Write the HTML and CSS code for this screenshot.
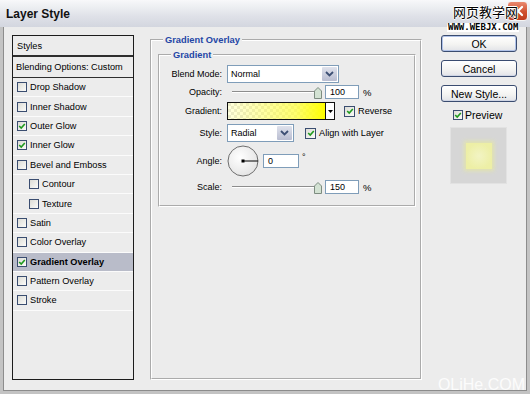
FILE: index.html
```html
<!DOCTYPE html>
<html>
<head>
<meta charset="utf-8">
<title>Layer Style</title>
<link rel="stylesheet" href="styles.css">
</head>
<body>
<div class="dialog">
  <div class="titlebar">
    <span class="title">Layer Style</span>
  </div>
  <div class="frame">
    <div class="list">
      <div class="row head">Styles</div>
      <div class="row blend">Blending Options: Custom</div>
      <div class="row item"><span class="cb"></span>Drop Shadow</div>
      <div class="row item"><span class="cb"></span>Inner Shadow</div>
      <div class="row item"><span class="cb on"><svg viewBox="0 0 10 10" width="8" height="8"><path d="M1.5 5 L4 7.5 L8.5 2.5" fill="none" stroke="#1f9a1f" stroke-width="2"/></svg></span>Outer Glow</div>
      <div class="row item"><span class="cb on"><svg viewBox="0 0 10 10" width="8" height="8"><path d="M1.5 5 L4 7.5 L8.5 2.5" fill="none" stroke="#1f9a1f" stroke-width="2"/></svg></span>Inner Glow</div>
      <div class="row item"><span class="cb"></span>Bevel and Emboss</div>
      <div class="row item sub"><span class="cb"></span>Contour</div>
      <div class="row item sub"><span class="cb"></span>Texture</div>
      <div class="row item"><span class="cb"></span>Satin</div>
      <div class="row item"><span class="cb"></span>Color Overlay</div>
      <div class="row item sel"><span class="cb on"><svg viewBox="0 0 10 10" width="8" height="8"><path d="M1.5 5 L4 7.5 L8.5 2.5" fill="none" stroke="#1f9a1f" stroke-width="2"/></svg></span>Gradient Overlay</div>
      <div class="row item"><span class="cb"></span>Pattern Overlay</div>
      <div class="row item"><span class="cb"></span>Stroke</div>
    </div>

    <fieldset class="group outer">
      <legend>Gradient Overlay</legend>
      <fieldset class="group inner">
        <legend>Gradient</legend>

        <div class="frow r1">
          <span class="lbl">Blend Mode:</span>
          <div class="select w-blend">
            <span class="val">Normal</span>
            <span class="dd"><svg viewBox="0 0 9 6" width="9" height="6"><path d="M1 1 L4.5 4.5 L8 1" fill="none" stroke="#3d4f74" stroke-width="1.8"/></svg></span>
          </div>
        </div>

        <div class="frow r2">
          <span class="lbl">Opacity:</span>
          <div class="slider">
            <span class="track"></span>
            <svg class="thumb" viewBox="0 0 8 12" width="8" height="12"><path d="M0.5 4 L4 0.5 L7.5 4 V11.5 H0.5 Z" fill="#d3e2d3" stroke="#7d8c80"/></svg>
          </div>
          <span class="input">100</span>
          <span class="unit">%</span>
        </div>

        <div class="frow r3">
          <span class="lbl">Gradient:</span>
          <div class="swatch">
            <span class="grad"></span>
            <span class="arrow"><svg viewBox="0 0 5 3" width="5" height="3"><path d="M0 0 H5 L2.5 3 Z" fill="#000"/></svg></span>
          </div>
          <span class="cb on ml-rev"><svg viewBox="0 0 10 10" width="8" height="8"><path d="M1.5 5 L4 7.5 L8.5 2.5" fill="none" stroke="#1f9a1f" stroke-width="2"/></svg></span>
          <span class="cbl">Reverse</span>
        </div>

        <div class="frow r4">
          <span class="lbl">Style:</span>
          <div class="select w-style">
            <span class="val">Radial</span>
            <span class="dd"><svg viewBox="0 0 9 6" width="9" height="6"><path d="M1 1 L4.5 4.5 L8 1" fill="none" stroke="#3d4f74" stroke-width="1.8"/></svg></span>
          </div>
          <span class="cb on ml-align"><svg viewBox="0 0 10 10" width="8" height="8"><path d="M1.5 5 L4 7.5 L8.5 2.5" fill="none" stroke="#1f9a1f" stroke-width="2"/></svg></span>
          <span class="cbl">Align with Layer</span>
        </div>

        <div class="frow r5">
          <span class="lbl">Angle:</span>
          <svg class="dial" viewBox="0 0 32 32" width="32" height="32">
            <defs>
              <radialGradient id="dg" cx="40%" cy="38%" r="70%">
                <stop offset="0" stop-color="#ffffff"/>
                <stop offset="1" stop-color="#e2e2e2"/>
              </radialGradient>
            </defs>
            <circle cx="16" cy="16" r="15" fill="url(#dg)" stroke="#6d6d6d" stroke-width="1"/>
            <line x1="16" y1="16" x2="31" y2="16" stroke="#000" stroke-width="1"/>
            <rect x="14.5" y="14.5" width="3" height="3" fill="#000"/>
          </svg>
          <span class="input w-angle">0</span>
          <span class="deg">°</span>
        </div>

        <div class="frow r6">
          <span class="lbl">Scale:</span>
          <div class="slider">
            <span class="track"></span>
            <svg class="thumb" viewBox="0 0 8 12" width="8" height="12"><path d="M0.5 4 L4 0.5 L7.5 4 V11.5 H0.5 Z" fill="#d3e2d3" stroke="#7d8c80"/></svg>
          </div>
          <span class="input">150</span>
          <span class="unit">%</span>
        </div>
      </fieldset>
    </fieldset>

    <div class="side">
      <div class="btn default">OK</div>
      <div class="btn">Cancel</div>
      <div class="btn">New Style...</div>
      <div class="prow">
        <span class="cb on"><svg viewBox="0 0 10 10" width="8" height="8"><path d="M1.5 5 L4 7.5 L8.5 2.5" fill="none" stroke="#1f9a1f" stroke-width="2"/></svg></span>
        <span>Preview</span>
      </div>
      <div class="preview"><span class="glow"></span></div>
    </div>
  </div>

  <span class="close"><svg viewBox="0 0 20 20" width="18" height="18"><path d="M5.5 5.5 L14.5 14.5 M14.5 5.5 L5.5 14.5" stroke="#fff" stroke-width="2.4" stroke-linecap="round"/></svg></span>
  <span class="wm-cn">网页教学网</span>
  <span class="wm-url">WWW.WEBJX.COM</span>
  <span class="wm-ol">OLiHe.COM</span>
</div>
</body>
</html>
```

FILE: styles.css
```css
* { box-sizing: border-box; }
html, body { margin: 0; padding: 0; }
body {
  width: 530px;
  height: 394px;
  overflow: hidden;
  background: #ececec;
  color: #000;
  font-family: "Liberation Sans", Arial, sans-serif;
  font-size: 9px;
}
.dialog {
  position: relative;
  width: 530px;
  height: 394px;
  display: flex;
  flex-direction: column;
  background: #ececec;
}
.titlebar {
  flex: none;
  height: 27px;
  display: flex;
  align-items: center;
  padding-left: 6px;
  background: linear-gradient(#f8f8fa 0%, #eef0f3 22%, #dfe1e8 60%, #d3d6df 100%);
}
.title {
  font-size: 12px;
  font-weight: bold;
  color: #111;
}
.frame {
  flex: 1;
  display: flex;
  border: 3px solid #c3c3c3;
  border-top: 0;
  box-shadow: inset 1px 0 0 #8c8c8c, inset -1px 0 0 #8c8c8c, inset 0 -1px 0 #8c8c8c;
  padding: 7px 10px 11px 9px;
}

/* style list */
.list {
  flex: none;
  width: 122px;
  margin-top: 1px;
  border: 1px solid #1c1c1c;
  background: #ececec;
  display: flex;
  flex-direction: column;
}
.row {
  flex: none;
  display: flex;
  align-items: center;
  white-space: nowrap;
  font-size: 9.2px;
}
.row.head {
  height: 21px;
  padding-left: 4px;
  border-bottom: 2px solid #2e2e2e;
}
.row.blend {
  height: 21px;
  padding-left: 3px;
  border-bottom: 1px solid #2e2e2e;
}
.row.item {
  height: 19.4px;
  padding-left: 4px;
  gap: 3px;
  border-bottom: 1px solid #fbfbfb;
}
.row.sub { padding-left: 16px; }
.row.sel {
  background: #b9bcc9;
  font-weight: bold;
}

/* checkbox */
.cb {
  flex: none;
  width: 11px;
  height: 11px;
  border: 1px solid #3a4d70;
  background: linear-gradient(135deg, #dcdcd6, #fbfbf9);
  display: inline-flex;
  align-items: center;
  justify-content: center;
}
.row .cb { width: 10px; height: 10px; }

/* groups */
.group {
  margin: 0;
  min-width: 0;
  border: 2px groove #ffffff;
}
.group > legend {
  padding: 0 2px;
  font-size: 9.3px;
  font-weight: bold;
  line-height: 12px;
  color: #2446a6;
}
.outer {
  flex: none;
  width: 272px;
  margin-left: 16px;
  padding: 3px 4px 0 6px;
}
.outer > legend { margin-left: 5px; }
.inner {
  padding: 3px 0 9px 0;
}
.inner > legend { margin-left: 11px; }

.frow {
  display: flex;
  align-items: center;
  white-space: nowrap;
}
.r1 { height: 20px; }
.r2 { height: 16px; }
.r3 { height: 22px; }
.r4 { height: 22px; }
.r5 { height: 34px; }
.r6 { height: 18px; }
.lbl {
  flex: none;
  width: 62px;
  margin-right: 5px;
  text-align: right;
}

.select {
  flex: none;
  height: 18px;
  display: flex;
  border: 1px solid #7f9db9;
  background: #fff;
}
.w-blend { width: 112px; }
.w-style { width: 67px; }
.select .val {
  flex: 1;
  display: flex;
  align-items: center;
  padding-left: 3px;
}
.select .dd {
  flex: none;
  width: 15px;
  margin: 1px;
  border-radius: 1px;
  background: linear-gradient(#dfe2ec, #b9bdd1);
  display: flex;
  align-items: center;
  justify-content: center;
}

.slider {
  position: relative;
  flex: none;
  width: 90px;
  height: 16px;
  margin-left: 5px;
}
.slider .track {
  position: absolute;
  left: 0;
  right: 4px;
  top: 7px;
  height: 2px;
  border-top: 1px solid #8d8d8d;
  border-bottom: 1px solid #ffffff;
}
.slider .thumb {
  position: absolute;
  right: 0;
  top: 3px;
}
.input {
  flex: none;
  width: 34px;
  height: 14px;
  margin-left: 3px;
  padding-left: 4px;
  display: flex;
  align-items: center;
  border: 1px solid #7f9db9;
  background: #fff;
}
.unit { margin-left: 4px; font-size: 9.5px; }

.swatch {
  flex: none;
  width: 108px;
  height: 18px;
  display: flex;
  border: 1px solid #111;
}
.swatch .grad {
  flex: 1;
  background:
    linear-gradient(to right, rgba(255, 255, 120, 0.25), rgba(255, 255, 60, 0.75) 70%, #ffff00),
    repeating-conic-gradient(#ffffff 0 25%, #e4e4e4 0 50%) 0 0 / 6px 6px;
}
.swatch .arrow {
  flex: none;
  width: 9px;
  border-left: 1px solid #111;
  background: #fff;
  display: flex;
  align-items: center;
  justify-content: center;
}
.ml-rev { margin-left: 9px; }
.ml-align { margin-left: 11px; }
.cbl { margin-left: 3px; font-size: 9.2px; }

.dial { flex: none; }
.w-angle { width: 36px; margin-left: 4px; }
.deg { margin-left: 3px; margin-bottom: 9px; }

/* right column */
.side {
  flex: none;
  width: 76px;
  margin-left: 19px;
  padding-top: 1px;
  display: flex;
  flex-direction: column;
  font-size: 10.5px;
}
.btn {
  flex: none;
  height: 17px;
  margin-bottom: 8px;
  display: flex;
  align-items: center;
  justify-content: center;
  border: 1px solid #3a4c70;
  border-radius: 3px;
  background: linear-gradient(#ffffff, #f4f4f2 55%, #e2e3e8);
  box-shadow: inset 0 -1px 0 #cfd5e4;
}
.btn.default {
  box-shadow: inset 0 0 0 1px #b0c2e8;
}
.prow {
  flex: none;
  height: 10px;
  display: flex;
  align-items: center;
  gap: 2px;
  padding-left: 12px;
}
.prow .cb { width: 10px; height: 10px; }
.preview {
  flex: none;
  width: 57px;
  height: 57px;
  margin-top: 7px;
  margin-left: 9px;
  background: #d6d6d6;
  box-shadow: inset 0 0 0 1px #e2e2e2;
  display: flex;
  align-items: center;
  justify-content: center;
}
.preview .glow {
  width: 26px;
  height: 26px;
  background: radial-gradient(#f2f4c4, #edefa6 70%);
  box-shadow: 0 0 4px 2px #e2e4ae;
}

/* overlays: close button and watermarks */
.close {
  position: absolute;
  top: 1px;
  left: 507px;
  width: 21px;
  height: 20px;
  border: 1px solid #f4f4f4;
  border-radius: 4px;
  background: linear-gradient(#ea8a70, #d0502f 55%, #bf3b1d);
  display: flex;
  align-items: center;
  justify-content: center;
}
.wm-cn {
  position: absolute;
  top: 3px;
  left: 453px;
  font-family: "Noto Sans CJK SC", sans-serif;
  font-size: 13px;
  line-height: 17px;
  color: #000;
  text-shadow: 1px 0 0 #fff, -1px 0 0 #fff, 0 1px 0 #fff, 0 -1px 0 #fff;
}
.wm-url {
  position: absolute;
  top: 23px;
  left: 447px;
  padding: 0 1px;
  background: #fff;
  font-family: "DejaVu Sans Mono", monospace;
  font-weight: bold;
  font-size: 9px;
  line-height: 9px;
  color: #000;
}
.wm-ol {
  position: absolute;
  right: 5px;
  bottom: 0;
  font-size: 16px;
  line-height: 18px;
  color: rgba(255, 255, 255, 0.85);
}
```
